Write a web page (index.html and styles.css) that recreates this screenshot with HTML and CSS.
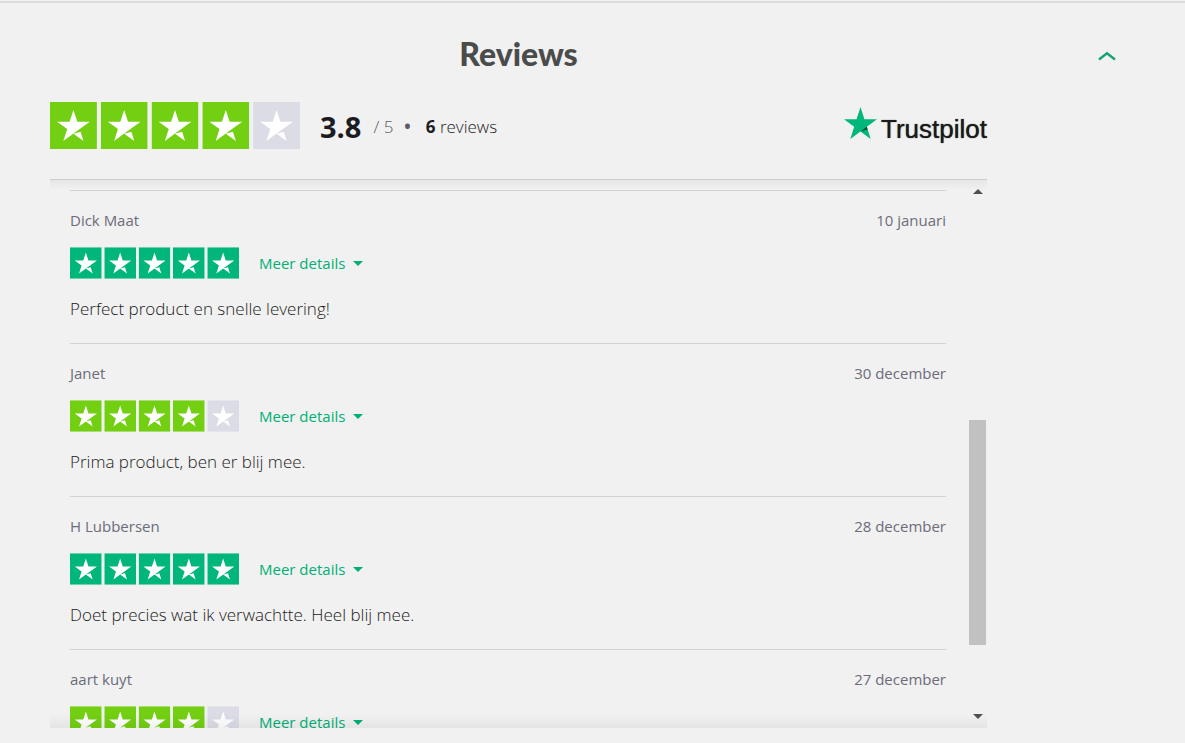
FILE: index.html
```html
<!DOCTYPE html>
<html lang="nl">
<head>
<meta charset="utf-8">
<title>Reviews</title>
<link rel="stylesheet" href="styles.css">
</head>
<body>
<svg class="defs" aria-hidden="true">
  <symbol id="star" viewBox="0 0 96 96">
    <path fill="currentColor" d="M0 0h96v96H0z"/>
    <path fill="#fff" d="M48 64.7L62.6 61l6.1 18.8zM81.6 40.4H55.9L48 16.2l-7.9 24.2H14.4l20.8 15-7.9 24.2 20.8-15 12.8-9.2z"/>
  </symbol>
  <symbol id="rating-4" viewBox="0 0 512 96">
    <g color="#73cf11">
      <use href="#star" width="96" height="96"/>
      <use href="#star" x="104" width="96" height="96"/>
      <use href="#star" x="208" width="96" height="96"/>
      <use href="#star" x="312" width="96" height="96"/>
    </g>
    <use href="#star" x="416" width="96" height="96" color="#dcdce6"/>
  </symbol>
  <symbol id="rating-5" viewBox="0 0 512 96">
    <g color="#00b67a">
      <use href="#star" width="96" height="96"/>
      <use href="#star" x="104" width="96" height="96"/>
      <use href="#star" x="208" width="96" height="96"/>
      <use href="#star" x="312" width="96" height="96"/>
      <use href="#star" x="416" width="96" height="96"/>
    </g>
  </symbol>
</svg>
<main class="page">
  <section class="widget">
    <h2 class="title">Reviews</h2>
    <header class="summary">
      <svg class="stars-large" role="img" aria-label="3.8 van 5 sterren"><use href="#rating-4"/></svg>
      <p class="score"><strong class="value">3.8</strong><span class="max">/ 5</span><span class="dot">•</span><span class="count"><b>6</b> reviews</span></p>
      <a class="brand" href="#">
        <svg class="brand-star" viewBox="0 0 33 32" aria-hidden="true">
          <path fill="#00b67a" d="M33 12.2H20.4L16.500 0l-3.900 12.200L0 12.200l10.200 7.500L6.300 32l10.200-7.500L26.700 32l-3.900-12.300z"/>
          <path fill="#005128" d="M23.700 22.400l-.9-2.700-6.300 4.800z"/>
        </svg>
        <span>Trustpilot</span>
      </a>
    </header>
    <div class="panel">
      <div class="list">
        <article class="review">
          <div class="meta"><span>Dick Maat</span><time>10 januari</time></div>
          <div class="rating"><svg class="stars" role="img" aria-label="5 sterren"><use href="#rating-5"/></svg><button class="more" type="button">Meer details</button></div>
          <p class="text">Perfect product en snelle levering!</p>
        </article>
        <article class="review">
          <div class="meta"><span>Janet</span><time>30 december</time></div>
          <div class="rating"><svg class="stars" role="img" aria-label="4 sterren"><use href="#rating-4"/></svg><button class="more" type="button">Meer details</button></div>
          <p class="text">Prima product, ben er blij mee.</p>
        </article>
        <article class="review">
          <div class="meta"><span>H Lubbersen</span><time>28 december</time></div>
          <div class="rating"><svg class="stars" role="img" aria-label="5 sterren"><use href="#rating-5"/></svg><button class="more" type="button">Meer details</button></div>
          <p class="text">Doet precies wat ik verwachtte. Heel blij mee.</p>
        </article>
        <article class="review">
          <div class="meta"><span>aart kuyt</span><time>27 december</time></div>
          <div class="rating"><svg class="stars" role="img" aria-label="4 sterren"><use href="#rating-4"/></svg><button class="more" type="button">Meer details</button></div>
        </article>
      </div>
      <div class="scrollbar" aria-hidden="true">
        <span class="arrow arrow-up"></span>
        <div class="track"><div class="thumb"></div></div>
        <span class="arrow arrow-down"></span>
      </div>
    </div>
  </section>
  <aside class="side">
    <button class="toggle" type="button" aria-label="Inklappen">
      <svg viewBox="0 0 18 10" aria-hidden="true"><path d="M1 8.500L9 2.200l8 6.300" fill="none" stroke="#12a66f" stroke-width="2.400"/></svg>
    </button>
  </aside>
</main>
</body>
</html>
```
FILE: styles.css
```css
* { box-sizing: border-box; }

body {
  margin: 0;
  background: #f1f1f1;
  color: #1b1b21;
  font-family: "Open Sans", "Noto Sans", sans-serif;
}

h2, p { margin: 0; }
button { border: 0; padding: 0; background: none; font: inherit; cursor: pointer; }
.defs { position: absolute; width: 0; height: 0; }

.page {
  display: flex;
  height: 100vh;
  padding: 0 0 15px 50px;
  border-top: 1px solid #f1f1f1;
  box-shadow: inset 0 2px #dadcdb;
}

.widget { flex: 1; min-width: 0; display: flex; flex-direction: column; }
.side { width: 198px; }

.title {
  padding-top: 35px;
  color: #4a4c4b;
  font-family: Lato, sans-serif;
  font-weight: 900;
  font-size: 32px;
  line-height: 36px;
  text-align: center;
}

.summary {
  display: flex;
  align-items: center;
  height: 107px;
}
.stars-large { width: 250px; height: 47px; margin-right: 20px; }
.score { display: flex; align-items: center; padding-top: 2px; font-size: 17px; font-weight: 300; line-height: 32px; }
.value { font-size: 29px; font-weight: 700; }
.count b { font-weight: 700; }
.max { margin-left: 12px; color: #5c5c68; }
.dot { margin: 0 15px 0 11px; color: #5c5c68; font-weight: 700; }
.brand {
  display: flex;
  align-items: flex-end;
  gap: 4px;
  margin-left: auto;
  color: #1b1b1b;
  font-family: "Liberation Sans", Arial, sans-serif;
  font-size: 26px;
  line-height: 32px;
  text-decoration: none;
  text-shadow: 0 0 1px #1b1b1b;
}
.brand-star { width: 33px; height: 32px; margin-bottom: 6px; }

.panel {
  position: relative;
  flex: 1;
  min-height: 0;
  display: flex;
  border-top: 1px solid #cdcdcd;
}
.panel::before, .panel::after {
  content: "";
  position: absolute;
  left: 0;
  right: 0;
  pointer-events: none;
}
.panel::before { top: 0; height: 10px; background: linear-gradient(#e6e6e6, rgba(241, 241, 241, 0)); }
.panel::after { bottom: 0; height: 14px; background: linear-gradient(rgba(27, 27, 33, 0), rgba(27, 27, 33, 0.06)); }

.list { flex: 1; overflow: hidden; padding: 10px 23px 0 20px; }
.review { padding: 18px 0 22px; border-top: 1px solid #d2d2d6; }
.meta {
  display: flex;
  justify-content: space-between;
  color: #6c6c7a;
  font-size: 15px;
  line-height: 22px;
}
.rating { display: flex; align-items: center; gap: 20px; height: 32px; margin-top: 16px; }
.stars { width: 169px; height: 32px; }
.more {
  display: flex;
  align-items: center;
  gap: 8px;
  color: #00b074;
  font-size: 15px;
  line-height: 20px;
}
.more::after {
  content: "";
  border: 5px solid transparent;
  border-top-color: currentColor;
  border-bottom: 0;
}
.text { margin-top: 18px; font-size: 17px; font-weight: 300; line-height: 24px; }

.scrollbar {
  display: flex;
  flex-direction: column;
  width: 17px;
  margin: 0 1px 0 0;
  padding: 9px 0;
  align-items: center;
}
.arrow { border: 5px solid transparent; }
.arrow-up { border-top: 0; border-bottom-color: #505050; }
.arrow-down { border-bottom: 0; border-top-color: #505050; }
.track { flex: 1; width: 100%; padding: 7px 0 3px; }
.thumb { position: relative; top: 43%; height: 44%; background: #c1c1c1; }

.toggle { display: block; margin: 50px 0 0 111px; }
.toggle svg { display: block; width: 18px; height: 10px; }
```
